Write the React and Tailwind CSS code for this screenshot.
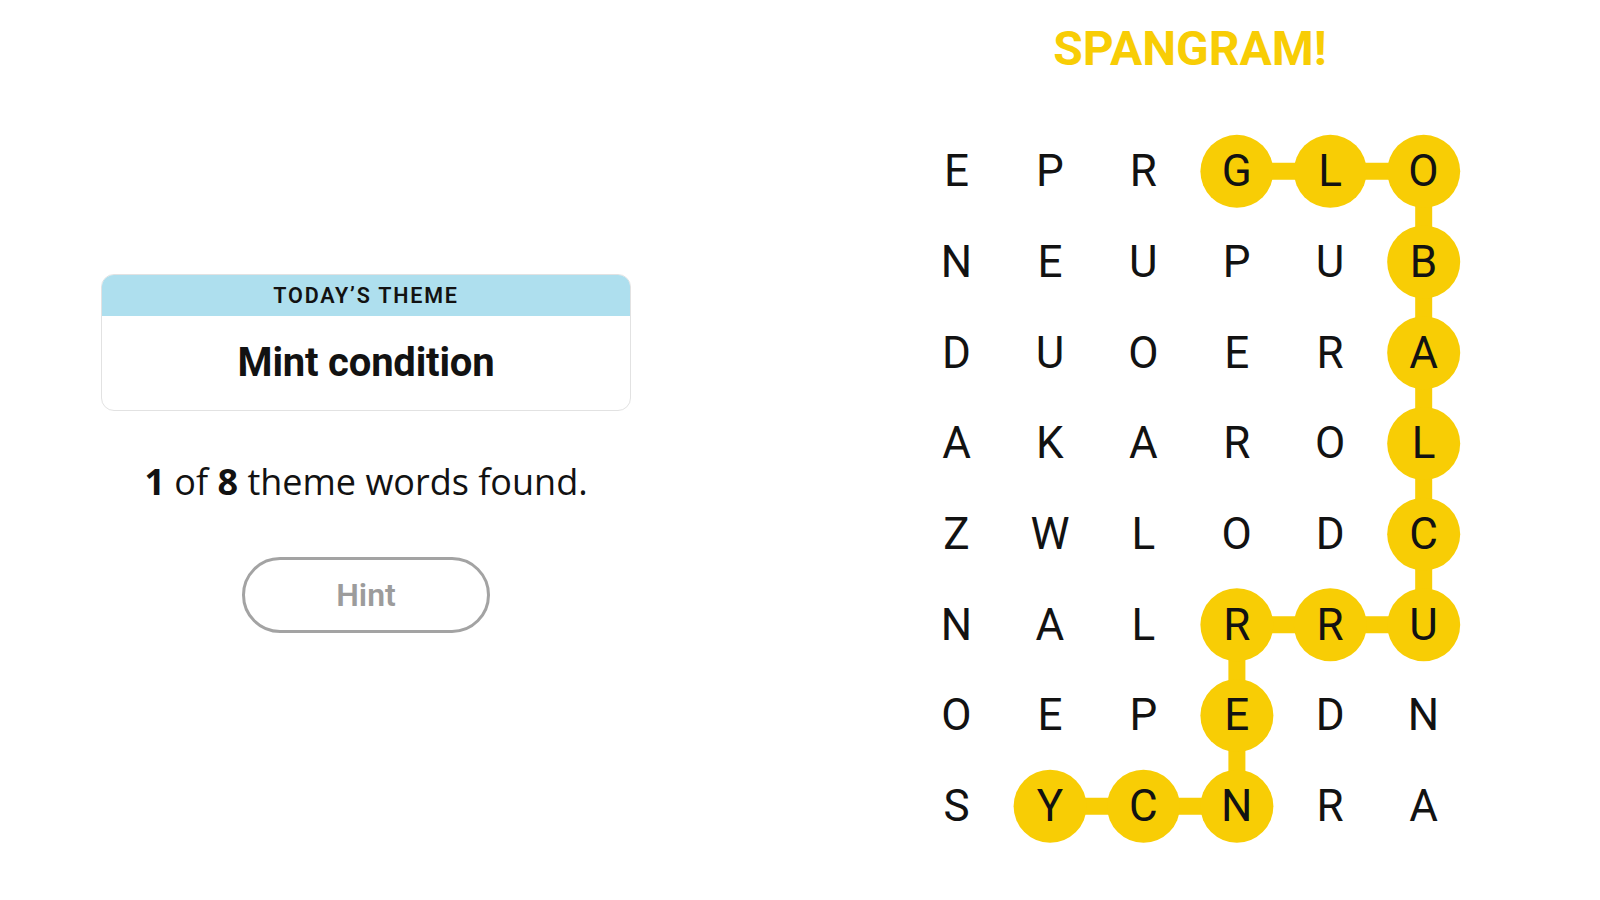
import React from "react";

const GRID = [
  "EPRGLO",
  "NEUPUB",
  "DUOERA",
  "AKAROL",
  "ZWLODC",
  "NALRRU",
  "OEPEDN",
  "SYCNRA",
];

const PATH = [
  [0, 3], [0, 4], [0, 5], [1, 5], [2, 5], [3, 5], [4, 5], [5, 5],
  [5, 4], [5, 3], [6, 3], [7, 3], [7, 2], [7, 1],
];

const CW = 93.4;
const RH = 90.7;
const YELLOW = "#f8cd05";

function PathDrawing() {
  const pts = PATH.map(([r, c]) => [c * CW + CW / 2, r * RH + RH / 2]);
  const d = pts.map((p, i) => `${i === 0 ? "M" : "L"}${p[0]} ${p[1]}`).join(" ");
  return (
    <svg
      className="absolute left-0 top-0"
      width={CW * 6}
      height={RH * 8}
      viewBox={`0 0 ${CW * 6} ${RH * 8}`}
    >
      <path d={d} fill="none" stroke={YELLOW} strokeWidth="17" strokeLinejoin="miter" />
      {pts.map((p, i) => (
        <circle key={i} cx={p[0]} cy={p[1]} r="36.5" fill={YELLOW} />
      ))}
    </svg>
  );
}

export default function App() {
  return (
    <div className="w-[1600px] h-[900px] bg-white flex font-['Roboto',sans-serif] text-[#121212]">
      <div className="w-[732px] flex flex-col items-center pt-[274px]">
        <div className="w-[530px] h-[137px] rounded-[13px] border border-[#e2e2e2] overflow-hidden flex flex-col">
          <div className="h-[41px] bg-[#aedfee] flex items-center justify-center">
            <span className="text-[21.5px] font-semibold tracking-[1.8px] leading-none">TODAY’S THEME</span>
          </div>
          <div className="flex-1 flex items-center justify-center">
            <span className="text-[40px] font-bold leading-none tracking-[-0.2px]">Mint condition</span>
          </div>
        </div>
        <p className="mt-[53px] text-[36px] leading-none font-['Open_Sans',sans-serif]">
          <span className="font-bold">1</span> of <span className="font-bold">8</span> theme words found.
        </p>
        <button className="mt-[57px] w-[248px] h-[76px] rounded-full border-[3px] border-[#a3a3a3] text-[#9c9c9c] text-[32px] font-semibold bg-white">
          Hint
        </button>
      </div>
      <div className="ml-[178px] w-[560px] flex flex-col items-center pt-[25px]">
        <h1 className="text-[48px] font-bold leading-none text-[#f8cd05]">SPANGRAM!</h1>
        <div className="relative mt-[53px] w-[560.4px] h-[725.6px]">
          <PathDrawing />
          <div className="relative grid grid-cols-6 auto-rows-[90.7px]">
            {GRID.map((row, r) =>
              row.split("").map((ch, c) => (
                <div key={`${r}-${c}`} className="flex items-center justify-center text-[44px] leading-none">
                  {ch}
                </div>
              ))
            )}
          </div>
        </div>
      </div>
    </div>
  );
}
